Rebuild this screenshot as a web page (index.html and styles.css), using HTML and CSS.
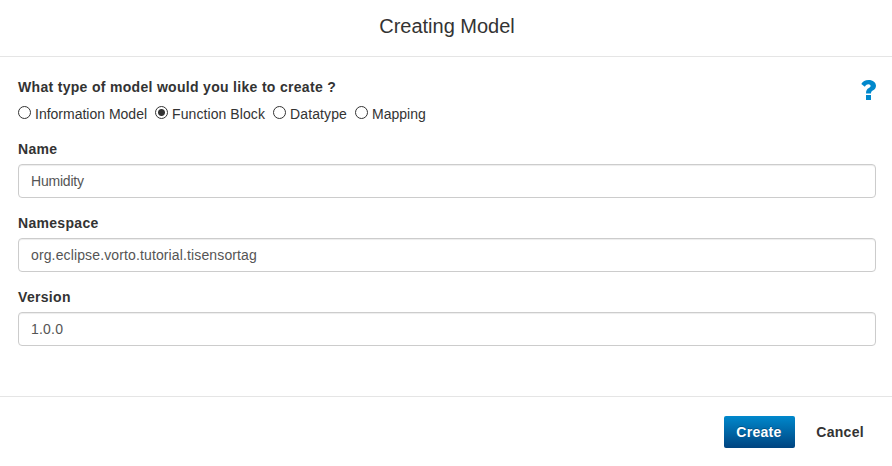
FILE: index.html
```html
<!DOCTYPE html>
<html lang="en">
<head>
<meta charset="utf-8">
<title>Creating Model</title>
<link rel="stylesheet" href="styles.css">
</head>
<body>
<form class="modal">
  <header class="modal-header"><h1>Creating Model</h1></header>
  <main class="modal-body">
    <div class="question-row">
      <span class="label question">What type of model would you like to create ?</span>
      <svg class="help" width="16" height="22" viewBox="0 0 16 22"><path d="M6 16h5v5H6zM1.300 5C2.800 2.200 5 .9 8.600.9c4.400 0 7.400 2.400 7.400 5.900 0 2.400-1.400 3.800-3.200 4.800-1.300.8-1.800 1.200-1.800 3H6c0-3.300 1-4.500 2.900-5.600 1.100-.7 1.700-1 1.700-1.900 0-1.100-.9-1.800-2.200-1.800-1.400 0-2.200.8-3.600 2.400z"/></svg>
    </div>
    <div class="options">
      <label class="option"><input type="radio" name="type">Information Model</label>
      <label class="option function"><input type="radio" name="type" checked>Function Block</label>
      <label class="option datatype"><input type="radio" name="type">Datatype</label>
      <label class="option"><input type="radio" name="type">Mapping</label>
    </div>
    <label class="field"><span class="label">Name</span><input class="name" type="text" value="Humidity"></label>
    <label class="field"><span class="label">Namespace</span><input class="namespace" type="text" value="org.eclipse.vorto.tutorial.tisensortag" spellcheck="false"></label>
    <label class="field"><span class="label">Version</span><input class="version" type="text" value="1.0.0"></label>
  </main>
  <footer class="modal-footer">
    <button type="button" class="btn primary">Create</button>
    <button type="button" class="btn">Cancel</button>
  </footer>
</form>
</body>
</html>
```
FILE: styles.css
```css
* { box-sizing: border-box; }
body { margin: 0; background: #fff; color: #333; font: 14px/20px "Liberation Sans", Arial, sans-serif; overflow: hidden; }
.modal { height: 466px; display: flex; flex-direction: column; }
.modal-header { height: 57px; padding-top: 13px; border-bottom: 1px solid #e5e5e5; text-align: center; }
h1 { margin: 0; font: 400 20px/26px "Liberation Sans", Arial, sans-serif; padding-left: 2px; }
.modal-body { flex: 1; padding: 20px 16px 0 18px; }
.question-row { display: flex; justify-content: space-between; height: 25px; }
.label { display: block; font-weight: 700; letter-spacing: .31px; }
.help { fill: #0088cc; margin-top: 2px; }
.options { display: flex; height: 37px; padding-top: 2px; }
.option { display: flex; margin-right: 8px; }
.function { letter-spacing: .08px; }
.datatype { letter-spacing: .12px; }
.option input { appearance: none; width: 13px; height: 13px; margin: 2px 4px 0 0; border: 1px solid #333; border-radius: 50%; background: #fff; }
.option input:checked { background: radial-gradient(circle, #333 3px, #fff 4px); }
.field { display: block; height: 74px; }
.field .label { margin-bottom: 5px; }
.field input { display: block; width: 100%; height: 34px; padding: 6px 12px; border: 1px solid #ccc; border-radius: 4px; background: #fff; color: #555; font: inherit; box-shadow: inset 0 1px 1px rgba(0,0,0,.075); }
.field .name { letter-spacing: -.2px; }
.field .namespace { letter-spacing: .13px; }
.field .version { letter-spacing: .2px; }
.modal-footer { height: 70px; display: flex; justify-content: flex-end; padding: 19px 16px 0 0; border-top: 1px solid #e5e5e5; gap: 9px; }
.btn { height: 32px; padding: 0 12px; border: 0; border-radius: 2px; background: transparent; color: #333; font: 700 14px/32px "Liberation Sans", Arial, sans-serif; letter-spacing: .31px; }
.primary { width: 71px; padding: 0 11px 0 12px; text-align: left; color: #fff; background: linear-gradient(#0088cc, #004480); text-shadow: 0 -1px 0 rgba(0,0,0,.25); }
```
